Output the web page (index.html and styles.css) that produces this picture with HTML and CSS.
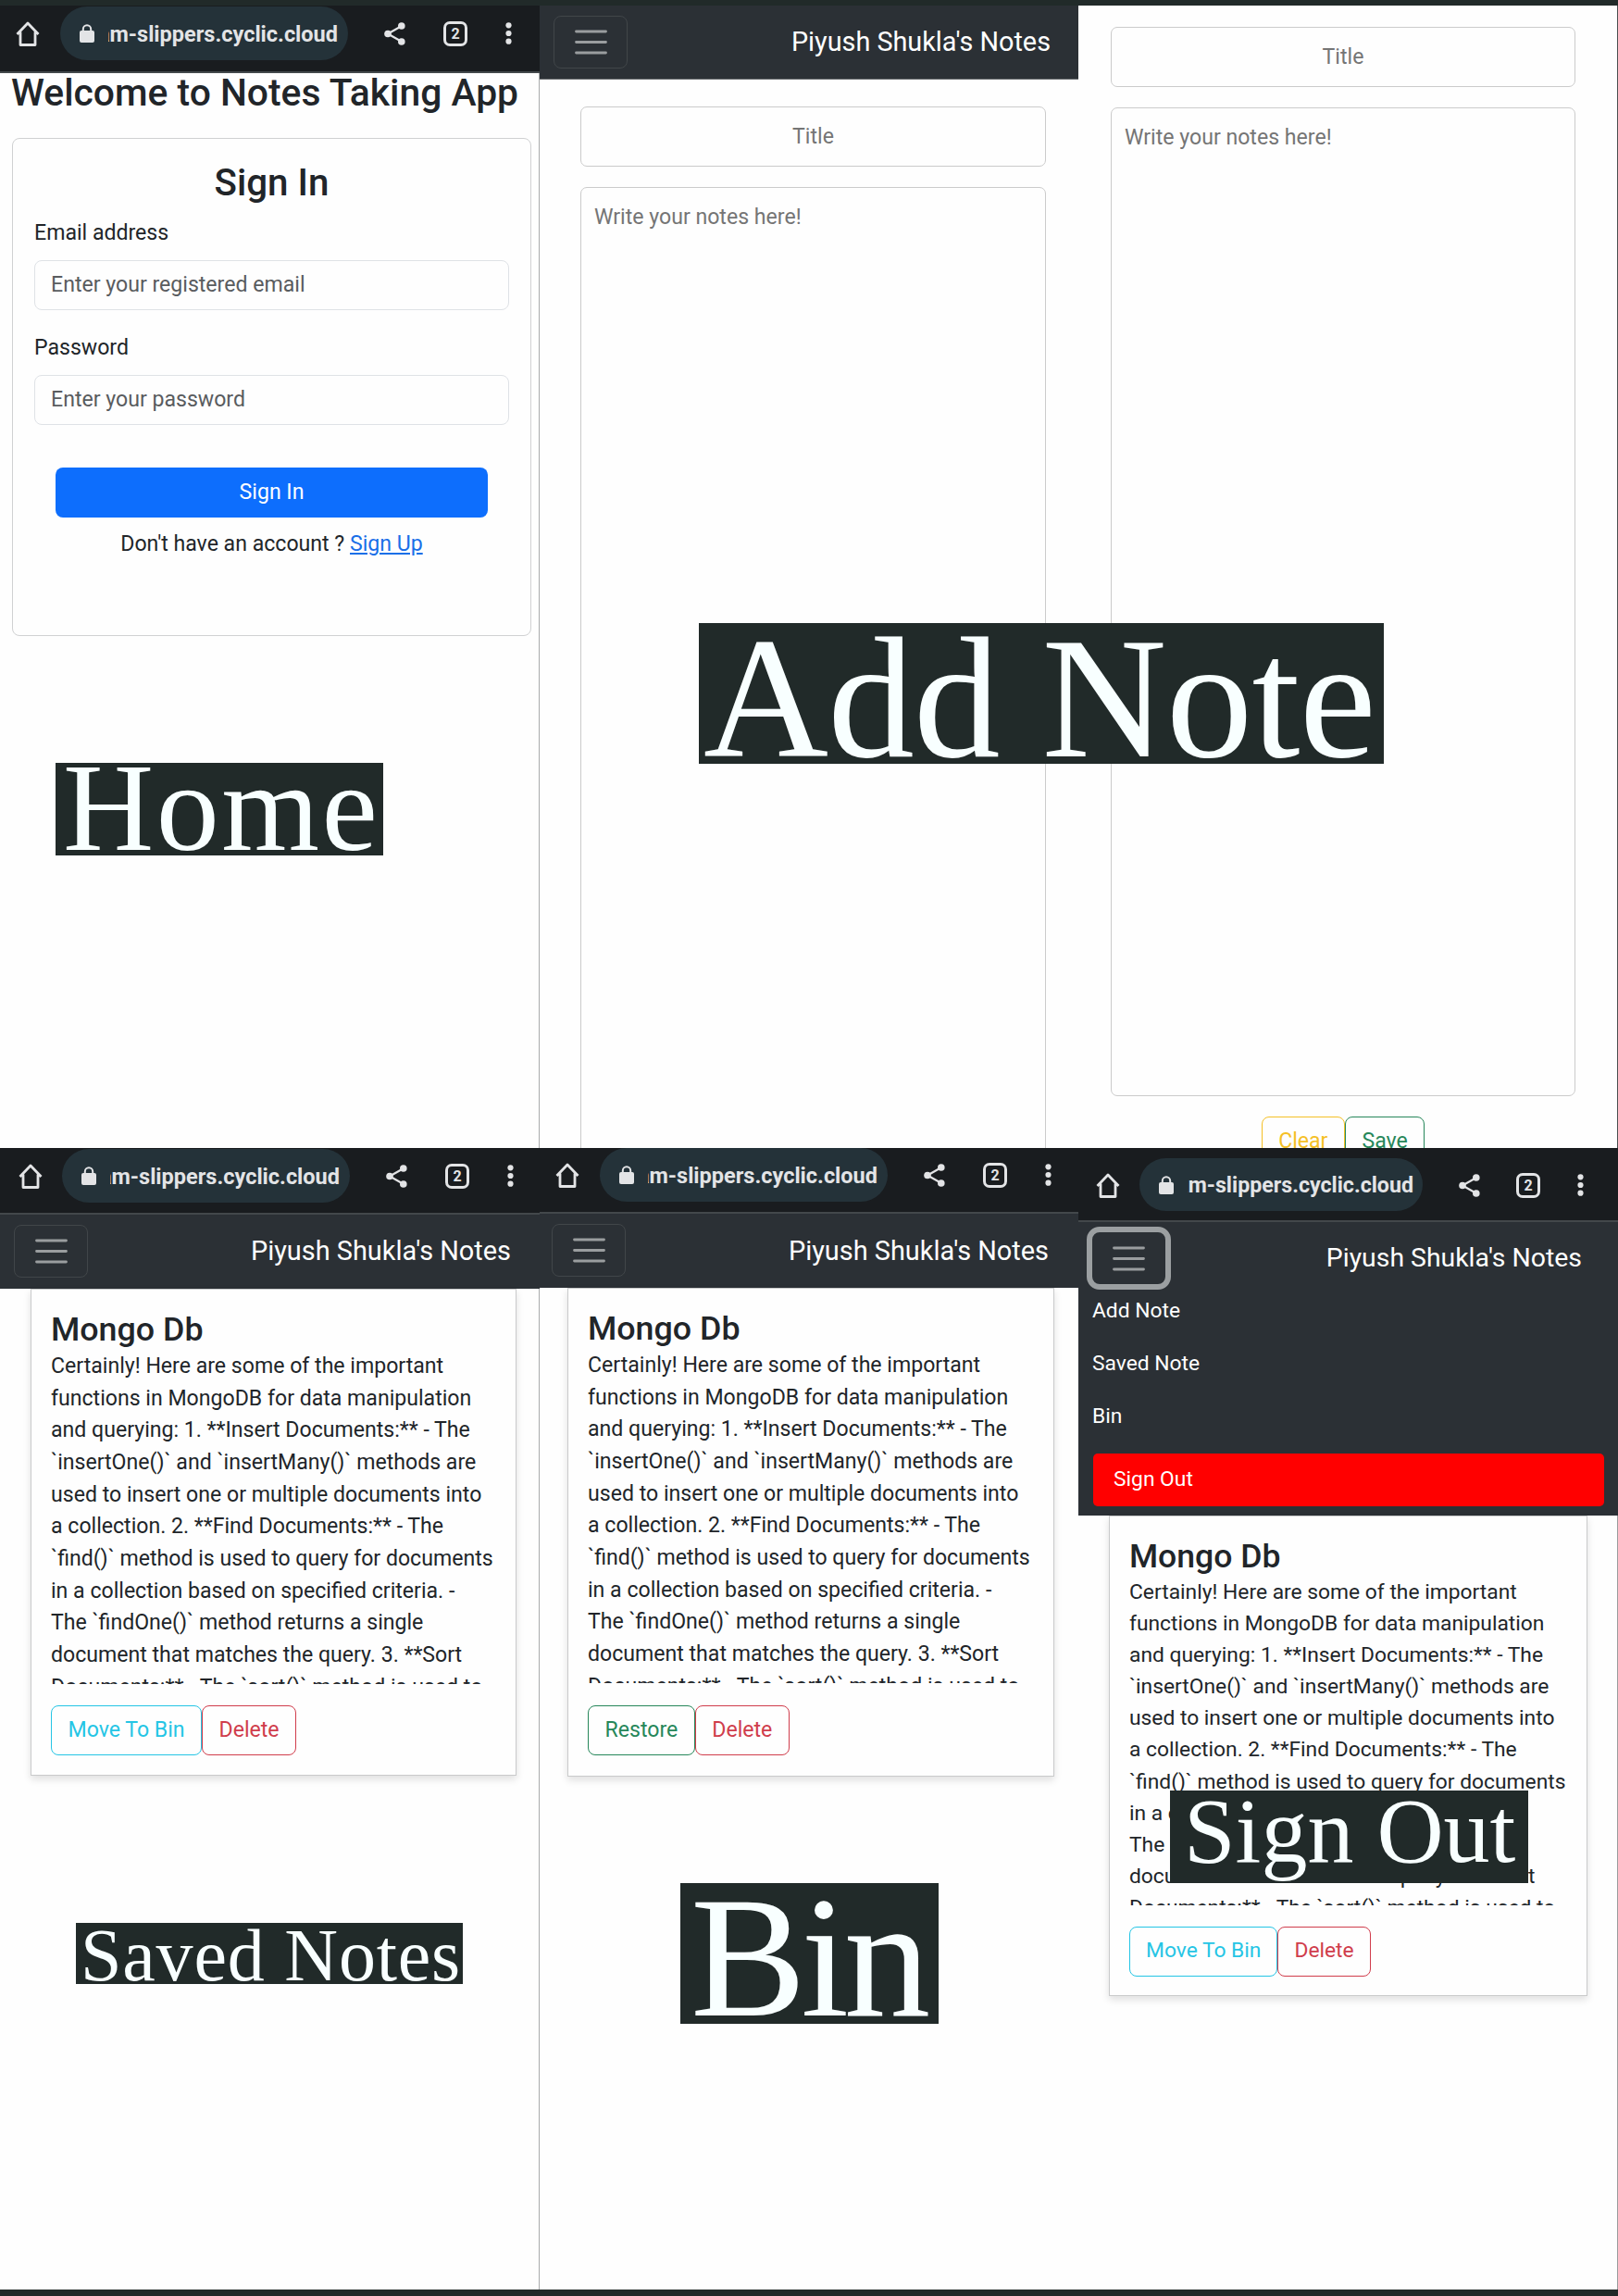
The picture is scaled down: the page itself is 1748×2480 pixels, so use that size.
FILE: index.html
```html
<!DOCTYPE html>
<html lang="en">
<head>
<meta charset="utf-8">
<title>Notes Taking App</title>
<link rel="stylesheet" href="styles.css">
</head>
<body>
<svg class="defs" width="0" height="0">
  <symbol id="home" viewBox="0 0 26 27"><path d="M1.500 14 13 2l11.500 12M5 11.500V25.500H21V11.500" fill="none" stroke="currentColor" stroke-width="2.800" stroke-linejoin="round"/></symbol>
  <symbol id="lock" viewBox="0 0 16 20"><path d="M3.800 8V5.500a4.200 4.200 0 0 1 8.400 0V8" fill="none" stroke="currentColor" stroke-width="2"/><rect y="7" width="16" height="13" rx="2" fill="currentColor"/></symbol>
  <symbol id="share" viewBox="0 0 23 25"><path d="M19 4 4 12.500 19 21" fill="none" stroke="currentColor" stroke-width="2.200"/><circle cx="18.800" cy="4" r="3.800" fill="currentColor"/><circle cx="4" cy="12.500" r="3.800" fill="currentColor"/><circle cx="18.800" cy="21" r="3.800" fill="currentColor"/></symbol>
  <symbol id="dots" viewBox="0 0 7 24"><circle cx="3.500" cy="3.300" r="3.100" fill="currentColor"/><circle cx="3.500" cy="12" r="3.100" fill="currentColor"/><circle cx="3.500" cy="20.700" r="3.100" fill="currentColor"/></symbol>
  <symbol id="menu" viewBox="0 0 35 27"><path d="M1.500 2h32M1.500 13.500h32M1.500 25h32" stroke="currentColor" stroke-width="2.800" stroke-linecap="round"/></symbol>
</svg>
<main class="board">
  <section class="screen home">
    <div class="chrome">
      <svg class="i-home"><use href="#home"/></svg>
      <div class="pill"><svg class="i-lock"><use href="#lock"/></svg><div class="url"><span>am-slippers.cyclic.cloud</span></div></div>
      <svg class="i-share"><use href="#share"/></svg><span class="tabs">2</span><svg class="i-dots"><use href="#dots"/></svg>
    </div>
    <h1>Welcome to Notes Taking App</h1>
    <form class="signin">
      <h2>Sign In</h2>
      <label>Email address</label>
      <div class="field">Enter your registered email</div>
      <label>Password</label>
      <div class="field">Enter your password</div>
      <div class="submit">Sign In</div>
      <p>Don't have an account ? <a>Sign Up</a></p>
    </form>
  </section>

  <section class="screen compose">
    <nav class="bar"><div class="toggler"><svg class="i-menu"><use href="#menu"/></svg></div><div class="brand">Piyush Shukla's Notes</div></nav>
    <div class="editor">
      <div class="title">Title</div>
      <div class="body">Write your notes here!</div>
    </div>
  </section>

  <section class="screen compose scrolled">
    <div class="editor">
      <div class="title">Title</div>
      <div class="body">Write your notes here!</div>
      <div class="actions"><div class="btn warning">Clear</div><div class="btn success">Save</div></div>
    </div>
  </section>

  <section class="screen saved">
    <div class="chrome">
      <svg class="i-home"><use href="#home"/></svg>
      <div class="pill"><svg class="i-lock"><use href="#lock"/></svg><div class="url"><span>am-slippers.cyclic.cloud</span></div></div>
      <svg class="i-share"><use href="#share"/></svg><span class="tabs">2</span><svg class="i-dots"><use href="#dots"/></svg>
    </div>
    <nav class="bar"><div class="toggler"><svg class="i-menu"><use href="#menu"/></svg></div><div class="brand">Piyush Shukla's Notes</div></nav>
    <article class="note">
      <h3>Mongo Db</h3>
      <div class="text">Certainly! Here are some of the important<br>functions in MongoDB for data manipulation<br>and querying: 1. **Insert Documents:** - The<br>`insertOne()` and `insertMany()` methods are<br>used to insert one or multiple documents into<br>a collection. 2. **Find Documents:** - The<br>`find()` method is used to query for documents<br>in a collection based on specified criteria. -<br>The `findOne()` method returns a single<br>document that matches the query. 3. **Sort<br>Documents:** - The `sort()` method is used to</div>
      <div class="actions"><div class="btn info">Move To Bin</div><div class="btn danger">Delete</div></div>
    </article>
  </section>

  <section class="screen bin">
    <div class="chrome">
      <svg class="i-home"><use href="#home"/></svg>
      <div class="pill"><svg class="i-lock"><use href="#lock"/></svg><div class="url"><span>am-slippers.cyclic.cloud</span></div></div>
      <svg class="i-share"><use href="#share"/></svg><span class="tabs">2</span><svg class="i-dots"><use href="#dots"/></svg>
    </div>
    <nav class="bar"><div class="toggler"><svg class="i-menu"><use href="#menu"/></svg></div><div class="brand">Piyush Shukla's Notes</div></nav>
    <article class="note">
      <h3>Mongo Db</h3>
      <div class="text">Certainly! Here are some of the important<br>functions in MongoDB for data manipulation<br>and querying: 1. **Insert Documents:** - The<br>`insertOne()` and `insertMany()` methods are<br>used to insert one or multiple documents into<br>a collection. 2. **Find Documents:** - The<br>`find()` method is used to query for documents<br>in a collection based on specified criteria. -<br>The `findOne()` method returns a single<br>document that matches the query. 3. **Sort<br>Documents:** - The `sort()` method is used to</div>
      <div class="actions"><div class="btn success">Restore</div><div class="btn danger">Delete</div></div>
    </article>
  </section>

  <section class="screen signout">
    <div class="chrome">
      <svg class="i-home"><use href="#home"/></svg>
      <div class="pill"><svg class="i-lock"><use href="#lock"/></svg><div class="url"><span>am-slippers.cyclic.cloud</span></div></div>
      <svg class="i-share"><use href="#share"/></svg><span class="tabs">2</span><svg class="i-dots"><use href="#dots"/></svg>
    </div>
    <nav class="bar"><div class="toggler focused"><svg class="i-menu"><use href="#menu"/></svg></div><div class="brand">Piyush Shukla's Notes</div></nav>
    <div class="menu">
      <div class="link">Add Note</div>
      <div class="link">Saved Note</div>
      <div class="link">Bin</div>
      <div class="logout">Sign Out</div>
    </div>
    <article class="note">
      <h3>Mongo Db</h3>
      <div class="text">Certainly! Here are some of the important<br>functions in MongoDB for data manipulation<br>and querying: 1. **Insert Documents:** - The<br>`insertOne()` and `insertMany()` methods are<br>used to insert one or multiple documents into<br>a collection. 2. **Find Documents:** - The<br>`find()` method is used to query for documents<br>in a collection based on specified criteria. -<br>The `findOne()` method returns a single<br>document that matches the query. 3. **Sort<br>Documents:** - The `sort()` method is used to</div>
      <div class="actions"><div class="btn info">Move To Bin</div><div class="btn danger">Delete</div></div>
    </article>
  </section>

  <div class="caption c-home">Home</div>
  <div class="caption c-add">Add Note</div>
  <div class="caption c-saved">Saved Notes</div>
  <div class="caption c-bin">Bin</div>
  <div class="caption c-out">Sign Out</div>
</main>
</body>
</html>
```
FILE: styles.css
```css
* { box-sizing: border-box; }
body { margin: 0; font-family: Roboto, "Liberation Sans", sans-serif; color: #212529; }
h1, h2, h3, p { margin: 0; font-weight: 500; }
svg { display: block; flex: none; }
.defs { position: absolute; }

.board {
  position: relative;
  width: 1748px;
  height: 2480px;
  padding: 6px 0 7px;
  background: #212a29;
  display: grid;
  grid-template-columns: 583px 582px 583px;
  grid-template-rows: 1234px 1233px;
}
.screen {
  --fs: 23.1px;
  --lh: 34.67px;
  background: #fefefe;
  font-size: var(--fs);
  line-height: var(--lh);
  white-space: nowrap;
  overflow: hidden;
  display: flex;
  flex-direction: column;
}
.home, .saved { box-shadow: inset -1px 0 #a9abac; }
.scrolled { box-shadow: inset -1px 0 #4a4f50; }
.signout { box-shadow: inset -1px 0 #9a9c9d; }

/* browser toolbar */
.chrome {
  flex: none;
  display: flex;
  align-items: flex-start;
  background: #191c1f;
  color: #e3e4e6;
  border-bottom: 2px solid #43484b;
}
.i-home { width: 26px; height: 27px; margin: 16px 22px 0 0; }
.pill {
  width: 311px;
  height: 58px;
  border-radius: 29px;
  background: #243239;
  display: flex;
  align-items: center;
  padding-left: 21px;
}
.i-lock { width: 16px; height: 20px; margin-right: 15px; }
.url {
  width: 248px;
  overflow: hidden;
  display: flex;
  justify-content: flex-end;
  font-weight: 700;
  font-size: 23.500px;
  padding-top: 2px;
}
.i-share { width: 23px; height: 25px; margin: 17px 41px 0 39px; }
.tabs {
  width: 26px;
  height: 27px;
  margin-top: 16px;
  border: 3px solid currentColor;
  border-radius: 7px;
  font-size: 16px;
  font-weight: 700;
  line-height: 21px;
  text-align: center;
}
.i-dots { width: 7px; height: 24px; margin: 17px 0 0 41px; }
.home .chrome { height: 73px; padding: 1px 0 0 17px; }
.saved .chrome { height: 72px; padding: 1px 0 0 20px; }
.saved .pill { margin-left: -1px; }
.bin .chrome { height: 71px; padding: 0 0 0 17px; }
.signout .chrome { height: 80px; padding: 11px 0 0 19px; }
.signout .pill { width: 306px; height: 57px; margin-left: -1px; }
.signout .url { width: 244px; font-size: 23.200px; }
.signout .i-share { margin-right: 39px; }
.signout .i-dots { margin-left: 40px; }

/* sign-in form */
.home h1 { font-size: 40.800px; line-height: 46px; height: 47px; margin: -2px 0 25px 12px; }
.signin {
  width: 561px;
  height: 538px;
  margin-left: 13px;
  padding: 24px 23px 0;
  border: 1px solid #d0d1d2;
  border-radius: 8px;
}
.signin h2 { font-size: 40.300px; line-height: 48px; text-align: center; }
.signin label { display: block; padding-top: 13px; height: 59px; }
.field {
  height: 54px;
  border: 1px solid #dfe2e6;
  border-radius: 8px;
  padding: 9px 17px;
  color: #595c5f;
  margin-bottom: 11px;
}
.submit {
  height: 54px;
  margin: 46px 23px 0;
  border-radius: 8px;
  background: #0d6efd;
  color: #fff;
  text-align: center;
  line-height: 53px;
}
.signin p { font-weight: 400; text-align: center; padding-top: 12px; }
.signin a { color: #1a6fe8; text-decoration: underline; }

/* navigation bar */
.bar {
  flex: none;
  height: 80px;
  background: #2b3035;
  display: flex;
  align-items: flex-start;
  justify-content: space-between;
}
.toggler {
  width: 80px;
  height: 57px;
  border: 1px solid #414649;
  border-radius: 8px;
  color: #9a9d9f;
  display: flex;
  justify-content: center;
  align-items: center;
}
.i-menu { width: 35px; height: 27px; }
.brand { color: #fff; font-size: 28.900px; line-height: 40px; padding-top: 9px; }
.compose .bar { padding: 11px 30px 0 15px; border-bottom: 1px solid #6b6f72; }
.compose .brand { font-size: 28.800px; padding-top: 8px; }
.saved .bar { padding: 11px 31px 0 15px; height: 80px; }
.saved .brand { padding-top: 8px; }
.bin .bar { padding: 11px 32px 0 13px; height: 80px; }
.signout .bar { padding: 5px 39px 0 9px; height: 74px; }
.toggler.focused { width: 91px; height: 68px; border: 6px solid #9b9fa1; border-radius: 14px; }
.signout .brand { font-size: 28.400px; padding-top: 14px; }
.menu { background: #2b3035; color: #fff; height: 243px; padding: 5px 15px 0; font-size: 22.800px; }
.link { height: 57px; }
.logout { height: 57px; margin: 0 0 0 1px; background: #f00; border-radius: 5px; padding: 11px 22px; }

/* note editor */
.editor { color: #757575; padding: 29px 35px 0 44px; }
.title { height: 65px; border: 1px solid #cbcbcb; border-radius: 7px; text-align: center; line-height: 64px; margin-bottom: 22px; }
.body { height: 1068px; border: 1px solid #cbcbcb; border-radius: 7px; padding: 15px 14px; }
.scrolled .editor { padding: 23px 46px 0 35px; }
.actions { display: flex; }
.editor .actions { justify-content: center; margin-top: 22px; }
.btn { height: 54px; border: 1px solid; border-radius: 8px; padding: 9px 17.500px; }
.warning { color: #f5c026; }
.success { color: #26875a; }
.info { color: #25c5e5; }
.danger { color: #d03d4c; }

/* saved note card */
.note {
  width: 525px;
  height: 526px;
  margin-left: 33px;
  padding: 22px 21px 0;
  border: 1px solid #c9cacb;
  box-shadow: 0 4px 8px rgba(0, 0, 0, .12);
}
.note h3 { font-size: 35.800px; line-height: 42px; height: 43px; }
.text { height: 361px; overflow: hidden; margin-bottom: 23px; padding-top: 1px; }
.bin .note { margin-left: 30px; width: 526px; height: 528px; }
.bin .text { margin-bottom: 24px; }
.signout .note { --lh: 34.100px; --fs: 22.800px; line-height: var(--lh); font-size: var(--fs); width: 517px; height: 519px; }
.signout .note h3 { font-size: 35.600px; }
.signout .text { height: 355px; padding-top: 0; }
.signout .btn { padding: 8px 17px; }

/* captions laid over the screens */
.caption {
  position: absolute;
  background: #212a29;
  color: #f8ffff;
  font-family: "Liberation Serif", serif;
  white-space: nowrap;
}
.c-home { left: 60px; top: 824px; width: 354px; height: 100px; padding-left: 8px; font-size: 136px; line-height: 97px; letter-spacing: 2.500px; }
.c-add { left: 755px; top: 673px; width: 740px; height: 152px; padding: 10px 0 0 5px; font-size: 187px; line-height: 142px; letter-spacing: -.8px; }
.c-saved { left: 82px; top: 2077px; width: 418px; height: 66px; padding: 4px 0 0 5px; font-size: 80px; line-height: 62px; letter-spacing: .8px; }
.c-bin { left: 735px; top: 2034px; width: 279px; height: 152px; padding: 7px 0 0 11px; font-size: 187px; line-height: 145px; letter-spacing: -5.500px; }
.c-out { left: 1264px; top: 1934px; width: 387px; height: 100px; padding-left: 15px; font-size: 100px; line-height: 88px; }
```
